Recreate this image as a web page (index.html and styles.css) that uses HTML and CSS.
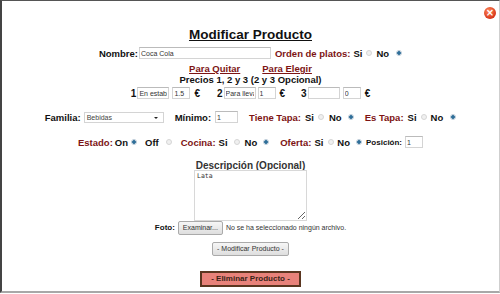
FILE: index.html
```html
<!DOCTYPE html>
<html lang="es">
<head>
  <meta charset="UTF-8" />
  <title>Modificar Producto</title>
  <link rel="stylesheet" href="styles.css">
</head>
<body>
  <div class="dialog">
    <span class="close">&times;</span>

    <h1 class="title">Modificar Producto</h1>

    <!-- nombre y orden -->
    <div class="row r-name">
      <span class="lbl">Nombre:</span>
      <input class="txt w-name" value="Coca Cola">
      <span class="lbl red ml4">Orden de platos:</span>
      <span class="lbl ml3">Si</span>
      <input type="radio" name="orden" class="rad">
      <span class="lbl ml4">No</span>
      <input type="radio" name="orden" class="rad ml7" checked>
    </div>

    <div class="row r-links">
      <a class="lnk" href="#">Para Quitar</a>
      <a class="lnk ml22" href="#">Para Elegir</a>
    </div>

    <div class="row r-precios">
      <span class="lbl">Precios 1, 2 y 3 (2 y 3 Opcional)</span>
    </div>

    <!-- precios -->
    <div class="row r-prices">
      <span class="lbl num">1</span>
      <input class="txt w-pn" value="En establecimiento">
      <input class="txt w-pv ml3" value="1.5">
      <span class="lbl eur">€</span>
      <span class="lbl num ml17">2</span>
      <input class="txt w-pn" value="Para llevar">
      <input class="txt w-pv ml2" value="1">
      <span class="lbl eur">€</span>
      <span class="lbl num ml16">3</span>
      <input class="txt w-pn" value="">
      <input class="txt w-pv ml3" value="0">
      <span class="lbl eur">€</span>
    </div>

    <!-- familia -->
    <div class="row r-fam">
      <span class="lbl">Familia:</span>
      <span class="sel ml3">Bebidas<span class="caret"></span></span>
      <span class="lbl ml11">Mínimo:</span>
      <input class="txt w-min ml4" value="1">
      <span class="lbl red ml11">Tiene Tapa:</span>
      <span class="lbl ml4">Si</span>
      <input type="radio" name="tapa" class="rad">
      <span class="lbl ml5">No</span>
      <input type="radio" name="tapa" class="rad ml6" checked>
      <span class="lbl red ml11">Es Tapa:</span>
      <span class="lbl ml4">Si</span>
      <input type="radio" name="estapa" class="rad">
      <span class="lbl ml4">No</span>
      <input type="radio" name="estapa" class="rad ml7" checked>
    </div>

    <!-- estado -->
    <div class="row r-estado">
      <span class="lbl red">Estado:</span>
      <span class="lbl ml2">On</span>
      <input type="radio" name="estado" class="rad ml3" checked>
      <span class="lbl ml8">Off</span>
      <input type="radio" name="estado" class="rad ml7">
      <span class="lbl red ml9">Cocina:</span>
      <span class="lbl ml3">Si</span>
      <input type="radio" name="cocina" class="rad ml6">
      <span class="lbl ml5">No</span>
      <input type="radio" name="cocina" class="rad ml6" checked>
      <span class="lbl red ml11">Oferta:</span>
      <span class="lbl ml3">Si</span>
      <input type="radio" name="oferta" class="rad ml5">
      <span class="lbl ml3">No</span>
      <input type="radio" name="oferta" class="rad ml6" checked>
      <span class="lbl small ml4">Posición:</span>
      <input class="txt w-pos ml3" value="1">
    </div>

    <div class="row r-desc">
      <span class="lbl gray">Descripción (Opcional)</span>
    </div>
    <div class="row r-area">
      <textarea class="area">Lata</textarea>
    </div>

    <div class="row r-foto">
      <span class="lbl small">Foto:</span>
      <span class="btn ml3">Examinar...</span>
      <span class="file ml3">No se ha seleccionado ningún archivo.</span>
    </div>

    <div class="row r-mod">
      <span class="btn">- Modificar Producto -</span>
    </div>

    <div class="row r-del">
      <span class="del">- Eliminar Producto -</span>
    </div>
  </div>
</body>
</html>
```

FILE: styles.css
```css
body {
  margin: 0;
  background: #ffffff;
  font-family: "Liberation Sans", Arial, sans-serif;
}
.dialog {
  position: relative;
  width: 500px;
  height: 293px;
  box-sizing: border-box;
  border-top: 1px solid #555;
  border-left: 2px solid #444;
  border-right: 1px solid #cfcfcf;
  border-bottom: 2px solid #a8a8a8;
  background: #fff;
}
.close {
  position: absolute;
  top: 6px;
  right: 3px;
  width: 12px;
  height: 12px;
  border-radius: 50%;
  background: radial-gradient(circle at 40% 35%, #ff8a5a, #d8361a 70%);
  color: #fff;
  font: bold 10px/12px "DejaVu Sans", sans-serif;
  text-align: center;
}
.title {
  margin: 25px 0 0;
  height: 17px;
  font-size: 13.5px;
  line-height: 17px;
  font-weight: bold;
  text-align: center;
  text-decoration: underline;
  color: #111;
}
.row {
  display: flex;
  justify-content: center;
  align-items: center;
}
.lbl {
  font-size: 9.5px;
  font-weight: bold;
  color: #111;
  white-space: nowrap;
}
.red { color: #7d1414; }
.gray { color: #333; font-size: 10px; }
.small { font-size: 8px; }
.num { font-size: 10px; margin-right: 1px; }
.eur { margin-left: 4px; font-size: 10px; }

.txt {
  box-sizing: border-box;
  height: 12px;
  padding: 0 1px;
  border: 1px solid #d4d4d4;
  border-top-color: #bbb;
  font: 7px Arial, "Liberation Sans", sans-serif;
  color: #333;
  background: #fff;
  outline: none;
}
.w-name { width: 132px; margin-left: 1px; }
.w-pn { width: 32px; }
.w-pv { width: 18px; }
.w-min { width: 23px; }
.w-pos { width: 18px; }

.rad {
  appearance: none;
  -webkit-appearance: none;
  box-sizing: border-box;
  width: 6px;
  height: 6px;
  margin: 0 0 0 4px;
  border-radius: 50%;
  border: 1px solid #d6d6d6;
  background: #f0f0f0;
}
.rad:checked {
  border-color: #b9c9d6;
  background: radial-gradient(circle, #2f6f99 0 1.6px, #dbe6ee 2px);
}

.lnk {
  font-size: 9.5px;
  font-weight: bold;
  color: #7d1414;
}

.sel {
  position: relative;
  box-sizing: border-box;
  width: 80px;
  height: 11px;
  padding-left: 2px;
  border: 1px solid #d4d4d4;
  font: 7px/9px Arial, "Liberation Sans", sans-serif;
  color: #444;
}
.caret {
  position: absolute;
  right: 5px;
  top: 4px;
  border-left: 2px solid transparent;
  border-right: 2px solid transparent;
  border-top: 2px solid #222;
}

.area {
  box-sizing: border-box;
  width: 113px;
  height: 51px;
  padding: 1px 2px;
  border: 1px solid #d8d8d8;
  font: 6.5px "DejaVu Sans Mono", monospace;
  color: #333;
  resize: both;
}

.btn {
  box-sizing: border-box;
  height: 14px;
  padding: 0 4px;
  border: 1px solid #aaa;
  border-radius: 2px;
  background: linear-gradient(#f6f6f6, #dedede);
  font: 7px/12px Arial, "Liberation Sans", sans-serif;
  color: #333;
}
.file {
  font: 7px Arial, "Liberation Sans", sans-serif;
  color: #333;
}
.del {
  box-sizing: border-box;
  width: 101px;
  height: 16px;
  border: 2px solid #5a3620;
  background: #e8827a;
  font: bold 8px/12px Arial, "Liberation Sans", sans-serif;
  color: #3a2418;
  text-align: center;
}

.ml2 { margin-left: 2px; }
.ml3 { margin-left: 3px; }
.ml4 { margin-left: 4px; }
.ml5 { margin-left: 5px; }
.ml6 { margin-left: 6px; }
.ml7 { margin-left: 7px; }
.ml8 { margin-left: 8px; }
.ml9 { margin-left: 9px; }
.ml11 { margin-left: 11px; }
.ml16 { margin-left: 16px; }
.ml17 { margin-left: 17px; }
.ml22 { margin-left: 22px; }

.r-name { margin-top: 3px; height: 14px; }
.r-links { margin-top: 3px; height: 11px; }
.r-precios { height: 11px; }
.r-prices { margin-top: 1px; height: 14px; }
.r-fam { margin-top: 10px; height: 14px; }
.r-estado { margin-top: 11px; height: 14px; }
.r-desc { margin-top: 11px; height: 10px; }
.r-area { margin-top: 0; }
.r-foto { margin-top: -1px; height: 15px; }
.r-mod { margin-top: 7px; height: 14px; }
.r-del { margin-top: 15px; }
```
